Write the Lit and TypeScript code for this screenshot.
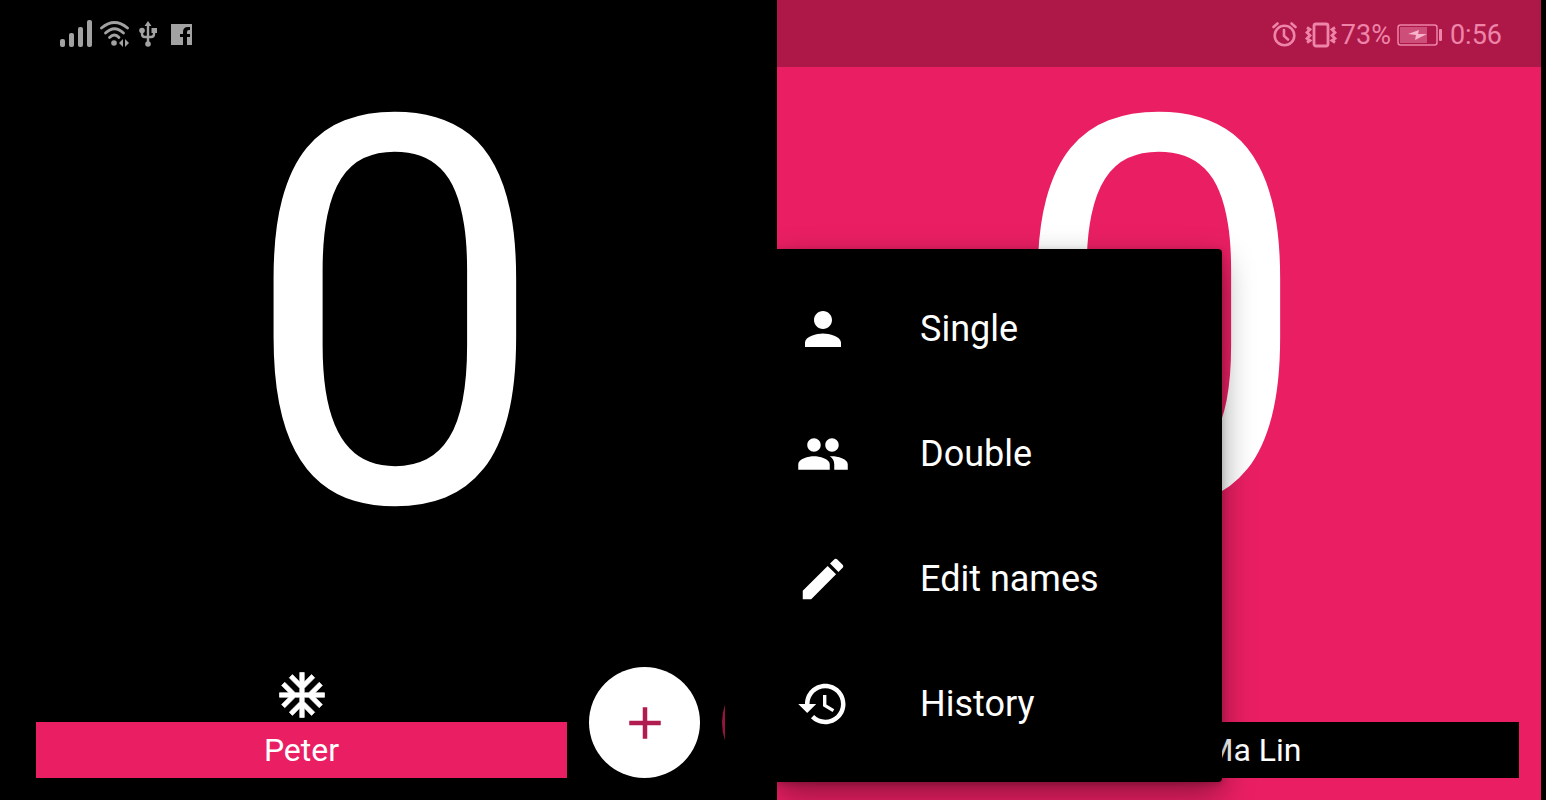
import { LitElement, html, css, svg } from "lit";
import { customElement, property } from "lit/decorators.js";

const icons = {
  person: svg`<path d="M12 12c2.21 0 4-1.79 4-4s-1.79-4-4-4-4 1.79-4 4 1.79 4 4 4zm0 2c-2.67 0-8 1.34-8 4v2h16v-2c0-2.66-5.33-4-8-4z"/>`,
  group: svg`<path d="M16 11c1.66 0 2.99-1.34 2.99-3S17.66 5 16 5s-3 1.34-3 3 1.34 3 3 3zm-8 0c1.66 0 2.99-1.34 2.99-3S9.66 5 8 5 5 6.34 5 8s1.34 3 3 3zm0 2c-2.33 0-7 1.17-7 3.5V19h14v-2.5c0-2.33-4.67-3.5-7-3.5zm8 0c-.29 0-.62.02-.97.05 1.16.84 1.97 1.97 1.97 3.45V19h6v-2.5c0-2.33-4.67-3.5-7-3.5z"/>`,
  edit: svg`<path d="M3 17.25V21h3.75L17.81 9.94l-3.75-3.75L3 17.25zM20.71 7.04c.39-.39.39-1.02 0-1.41l-2.34-2.34c-.39-.39-1.02-.39-1.41 0l-1.83 1.83 3.75 3.75 1.83-1.83z"/>`,
  history: svg`<path d="M13 3c-4.97 0-9 4.03-9 9H1l3.89 3.89.07.14L9 12H6c0-3.87 3.13-7 7-7s7 3.13 7 7-3.13 7-7 7c-1.93 0-3.68-.79-4.94-2.06l-1.42 1.42C8.27 19.99 10.51 21 13 21c4.97 0 9-4.03 9-9s-4.03-9-9-9zm-1 5v5l4.28 2.54.72-1.21-3.5-2.08V8H12z"/>`,
  serve: svg`<path stroke="currentColor" stroke-width="0.3" d="M22 11h-4.17l3.24-3.24-1.41-1.42L15 11h-2V9l4.66-4.66-1.42-1.41L13 6.17V2h-2v4.17L7.76 2.93 6.34 4.34 11 9v2H9L4.34 6.34 2.93 7.76 6.17 11H2v2h4.17l-3.24 3.24 1.41 1.42L9 13h2v2l-4.66 4.66 1.42 1.41L11 17.83V22h2v-4.17l3.24 3.24 1.42-1.41L13 15v-2h2l4.66 4.66 1.41-1.42L17.83 13H22z"/>`,
  add: svg`<path d="M19 13h-6v6h-2v-6H5v-2h6V5h2v6h6z"/>`,
};

const menuItems = [
  { icon: icons.person, label: "Single" },
  { icon: icons.group, label: "Double" },
  { icon: icons.edit, label: "Edit names" },
  { icon: icons.history, label: "History" },
];

const glyph = (shape: unknown) =>
  html`<svg class="glyph" viewBox="0 0 24 24" aria-hidden="true">${shape}</svg>`;

@customElement("options-menu")
export class OptionsMenu extends LitElement {
  static styles = css`
    :host {
      display: block;
      background: #000;
      border-radius: 0 4px 4px 0;
      box-shadow: 0 12px 32px rgba(0, 0, 0, 0.4), 0 2px 6px rgba(0, 0, 0, 0.2);
      padding: 17px 0 16px;
      box-sizing: border-box;
    }
    .item {
      display: flex;
      align-items: center;
      gap: 70px;
      width: 100%;
      height: 125px;
      padding: 0 19px;
      border: 0;
      background: none;
      color: #fff;
      font: 36px/42px Roboto, sans-serif;
      text-align: left;
      cursor: pointer;
    }
    .glyph {
      width: 54px;
      height: 54px;
      fill: currentColor;
      flex: none;
    }
  `;

  render() {
    return html`${menuItems.map(
      (item) => html`<button class="item" role="menuitem">${glyph(item.icon)}<span>${item.label}</span></button>`
    )}`;
  }
}

@customElement("player-panel")
export class PlayerPanel extends LitElement {
  @property() name = "";
  @property({ type: Number }) score = 0;
  @property({ type: Boolean }) serving = false;
  @property({ type: Boolean, reflect: true }) away = false;

  static styles = css`
    :host {
      display: flex;
      flex-direction: column;
      background: #000;
      color: #fff;
      font-family: Roboto, sans-serif;
      overflow: hidden;
      position: relative;
      min-width: 0;
    }
    :host([away]) {
      background: #ea1f63;
    }
    .status {
      height: 67px;
      flex: none;
    }
    :host([away]) .status {
      background: #ad1848;
    }
    .score {
      font-size: 540px;
      line-height: 500px;
      text-align: center;
    }
    .footer {
      display: flex;
      align-items: flex-end;
      gap: 22px;
      margin-top: auto;
      padding: 0 52px 22px 23px;
    }
    :host([away]) .footer {
      flex-direction: row-reverse;
      padding: 0 22px 22px 78px;
    }
    .player {
      flex: 1;
      display: flex;
      flex-direction: column;
      align-items: center;
    }
    .name {
      width: 100%;
      height: 56px;
      border: 0;
      padding: 0;
      background: #ea1f63;
      color: #fff;
      font: 32px/56px Roboto, sans-serif;
      cursor: pointer;
    }
    :host([away]) .name {
      background: #000;
    }
    .glyph {
      width: 54px;
      height: 54px;
      fill: currentColor;
      display: block;
    }
    .add {
      width: 111px;
      height: 111px;
      flex: none;
      display: grid;
      place-items: center;
      border: 0;
      padding: 0;
      border-radius: 50%;
      background: #fff;
      color: #b01b50;
      cursor: pointer;
    }
    .peek {
      width: 3px;
      height: 111px;
      flex: none;
      overflow: hidden;
    }
    .disc {
      width: 111px;
      height: 111px;
      border-radius: 50%;
      background: #94153f;
    }
  `;

  render() {
    return html`
      <div class="status"><slot name="status"></slot></div>
      <div class="score">${this.score}</div>
      <div class="footer">
        <div class="player">
          ${this.serving ? glyph(icons.serve) : ""}
          <button class="name">${this.name}</button>
        </div>
        <button class="add" aria-label="Add point">${glyph(icons.add)}</button>
        ${this.away ? "" : html`<div class="peek"><div class="disc"></div></div>`}
      </div>
      <slot></slot>
    `;
  }
}

@customElement("app-root")
export class AppRoot extends LitElement {
  static styles = css`
    :host {
      display: grid;
      grid-template-columns: 1fr 1fr;
      min-height: 100vh;
      box-sizing: border-box;
      padding: 0 5px 0 13px;
      background: #000;
      font-family: Roboto, sans-serif;
    }
    .left,
    .right {
      display: flex;
      align-items: center;
      height: 67px;
      box-sizing: border-box;
    }
    .left {
      gap: 8px;
      padding-left: 47px;
      color: #a2a2a2;
    }
    .right {
      justify-content: flex-end;
      gap: 8px;
      padding: 2px 39px 0 0;
      color: #ee84a8;
      font-size: 27px;
      line-height: 32px;
    }
    .power {
      display: flex;
      align-items: center;
      gap: 6px;
    }
    .ring {
      display: flex;
      align-items: center;
      gap: 4px;
    }
    .icon {
      display: block;
      fill: currentColor;
      flex: none;
    }
    .menu {
      position: absolute;
      left: 0;
      bottom: 18px;
      width: 445px;
    }
  `;

  render() {
    return html`
      <player-panel name="Peter" .score=${0} serving>
        <div class="left" slot="status">
          <svg class="icon" width="32" height="28" viewBox="0 0 32 28" role="img" aria-label="Signal">
            <rect x="0" y="19" width="5" height="8" rx="2" />
            <rect x="9" y="13" width="5" height="14" rx="2" />
            <rect x="18" y="7" width="5" height="20" rx="2" />
            <rect x="27" y="0" width="5" height="27" rx="2" />
          </svg>
          <svg class="icon" width="30" height="26" viewBox="0 0 30 26" role="img" aria-label="Wi-Fi">
            <g fill="none" stroke="currentColor" stroke-width="2.8" stroke-linecap="round">
              <path d="M1.5 7Q14.5-4 27.5 7" />
              <path d="M5.5 12Q14.5 3.5 23.5 12" />
              <path d="M9.5 16.5Q14.5 11.5 19 16.500" />
            </g>
            <circle cx="14" cy="22" r="2.8" />
            <path d="M23 18v8l-4-4zM25 18v8l4-4z" />
          </svg>
          <svg class="icon" width="19" height="26" viewBox="0 0 19 26" role="img" aria-label="USB">
            <g fill="none" stroke="currentColor" stroke-width="2.4">
              <path d="M10 3v20M4 10v3q0 3 3 3h6q3 0 3-3v-4" />
            </g>
            <path d="M10 0l3.500 5h-7zM13.500 7H19v5h-5.500z" />
            <circle cx="4" cy="9.5" r="2.8" />
            <circle cx="10" cy="23" r="2.8" />
          </svg>
          <svg class="icon" width="34" height="22" viewBox="0 0 34 22" role="img" aria-label="Facebook">
            <path fill-rule="evenodd" d="M6 1h21v21h-5v-8h3v-3h-3V9q0-2 2-2h1V4h-2q-5 0-5 5v2h-3v3h3v8H6z" />
          </svg>
        </div>
      </player-panel>
      <player-panel name="Ma Lin" .score=${0} away>
        <div class="right" slot="status">
          <svg class="icon" width="25" height="25" viewBox="0 0 25 25" role="img" aria-label="Alarm">
            <g fill="none" stroke="currentColor" stroke-width="2.6" stroke-linecap="round">
              <circle cx="12.5" cy="13.5" r="9.8" />
              <path d="M12 8v6l4 3.5M1.500 5l4-3.500M23.500 5l-4-3.500" />
            </g>
          </svg>
          <div class="power">
            <span class="ring">
              <svg class="icon" width="32" height="26" viewBox="0 0 32 26" role="img" aria-label="Vibrate">
                <rect x="9" y="2" width="14" height="22" rx="2" fill="none" stroke="currentColor" stroke-width="2.8" />
                <path d="M2 5.500l3 2-3 3 3 3-3 3 3 2-3 2M30 5.500l-3 2 3 3-3 3 3 3-3 2 3 2" fill="none" stroke="currentColor" stroke-width="2.8" />
              </svg>
              <span>73%</span>
            </span>
            <svg class="icon" width="45" height="22" viewBox="0 0 45 22" role="img" aria-label="Charging">
              <rect x="1" y="1" width="39" height="20" rx="2.5" fill="none" stroke="currentColor" stroke-width="1.5" />
              <rect x="3" y="3" width="27" height="16" opacity="0.5" />
              <path d="M11 10l11-4-1 4h9l-12 6 1-5z" fill="#f8b4ca" />
              <rect x="42" y="5" width="3" height="12" rx="1" />
            </svg>
          </div>
          <span>0:56</span>
        </div>
        <options-menu class="menu" role="menu"></options-menu>
      </player-panel>
    `;
  }
}
